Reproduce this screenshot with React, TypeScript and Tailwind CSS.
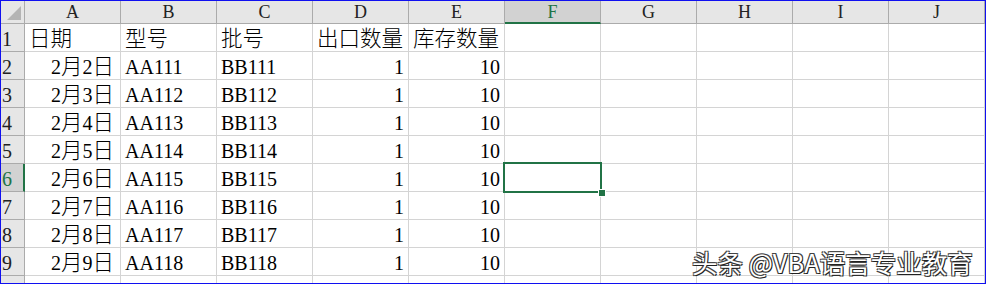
import React from "react";

const cols = ["A", "B", "C", "D", "E", "F", "G", "H", "I", "J"];

type Row = { date: string; model: string; batch: string; out: string; stock: string };

const rows: Row[] = [2, 3, 4, 5, 6, 7, 8, 9].map((d, i) => ({
  date: `2月${d}日`,
  model: `AA${111 + i}`,
  batch: `BB${111 + i}`,
  out: "1",
  stock: "10",
}));

const font = { fontFamily: '"Liberation Serif", "Noto Sans CJK SC", serif' };

const cell =
  "h-[28px] border-r border-b border-[#d4d4d4] pl-[4px] pt-[2px] text-[20px] leading-[26px] text-black whitespace-nowrap overflow-hidden";

// CJK glyphs render a little larger in the sheet font, so wrap them
function CellText({ v }: { v: string }) {
  const parts = v.match(/[\u4e00-\u9fff]+|[^\u4e00-\u9fff]+/g) ?? [];
  return (
    <>
      {parts.map((p, i) =>
        /[\u4e00-\u9fff]/.test(p) ? (
          <span key={i} className="text-[21.5px] leading-[26px] font-light">
            {p}
          </span>
        ) : (
          <span key={i}>{p}</span>
        ),
      )}
    </>
  );
}

function RowHead({ n, active }: { n: number | null; active?: boolean }) {
  return (
    <div
      className={
        active
          ? "h-[28px] border-b border-[#ababab] border-r-2 border-r-[#217346] bg-[#d2d2d2] pl-[1px] pt-[2px] text-[20px] leading-[26px] text-[#217346]"
          : "h-[28px] border-b border-r border-[#ababab] bg-[#e6e6e6] pl-[1px] pt-[2px] text-[20px] leading-[26px] text-[#222]"
      }
    >
      {n}
    </div>
  );
}

export default function App() {
  const data: string[][] = [
    ["日期", "型号", "批号", "出口数量", "库存数量"],
    ...rows.map((r) => [r.date, r.model, r.batch, r.out, r.stock]),
    ["", "", "", "", ""],
  ];

  return (
    <div
      className="relative w-[986px] h-[284px] overflow-hidden border border-[#1010f0] bg-white"
      style={font}
    >
      <div className="grid grid-cols-[24px_repeat(10,96px)]">
        {/* header row */}
        <div className="relative h-[23px] border-r border-b border-[#ababab] bg-[#e6e6e6]">
          <svg className="absolute right-[3px] bottom-[3px]" width="14" height="14" viewBox="0 0 14 14">
            <polygon points="14,0 14,14 0,14" fill="#b4b4b4" />
          </svg>
        </div>
        {cols.map((c) =>
          c === "F" ? (
            <div
              key={c}
              className="h-[23px] border-r border-[#ababab] border-b-2 border-b-[#217346] bg-[#d2d2d2] text-center text-[18px] leading-[22px] text-[#217346]"
            >
              {c}
            </div>
          ) : (
            <div
              key={c}
              className="h-[23px] border-r border-b border-[#ababab] bg-[#e6e6e6] text-center text-[18px] leading-[22px] text-[#222]"
            >
              {c}
            </div>
          ),
        )}

        {data.map((r, ri) => (
          <React.Fragment key={ri}>
            <RowHead n={ri < 9 ? ri + 1 : null} active={ri === 5} />
            {cols.map((c, ci) => {
              const v = r[ci] ?? "";
              const right = ri > 0 && (ci === 0 || ci === 3 || ci === 4);
              const selected = ri === 5 && c === "F";
              return (
                <div
                  key={c}
                  className={`${cell} ${right ? "text-right" : "text-left"} ${ci === 0 ? "pr-[6px]" : "pr-[4px]"} ${selected ? "relative overflow-visible" : ""}`}
                >
                  <CellText v={v} />
                  {selected && (
                    <div className="absolute left-[-2px] top-[-2px] w-[99px] h-[31px] border-2 border-[#217346]">
                      <div className="absolute right-[-6px] bottom-[-6px] w-[8px] h-[8px] bg-[#217346] border border-white" />
                    </div>
                  )}
                </div>
              );
            })}
          </React.Fragment>
        ))}
      </div>

      <div
        className="absolute left-[691px] top-[246px] text-[25.5px] leading-[30px] text-white whitespace-nowrap"
        style={{
          fontFamily: '"Noto Sans CJK SC", "Noto Sans", sans-serif',
          textShadow: "1px 1px 0 #222, -1px -1px 0 #444, 1px -1px 0 #444, -1px 1px 0 #444",
        }}
      >
        头条 @VBA语言专业教育
      </div>
    </div>
  );
}
